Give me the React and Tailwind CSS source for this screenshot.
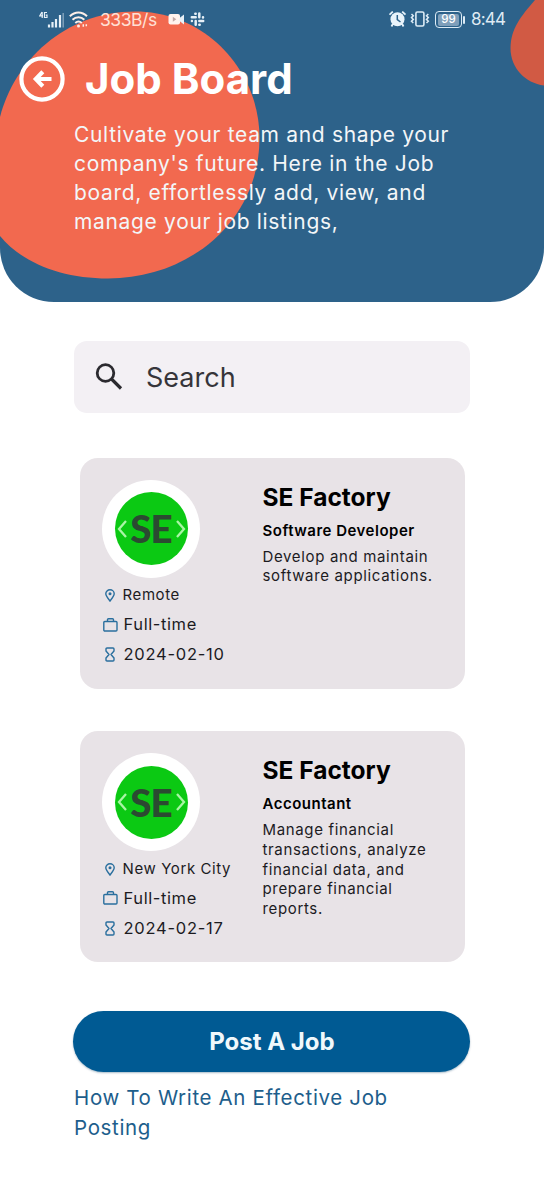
import React from "react";

const jobs = [
  {
    place: "Remote",
    type: "Full-time",
    date: "2024-02-10",
    role: "Software Developer",
    lines: ["Develop and maintain", "software applications."],
  },
  {
    place: "New York City",
    type: "Full-time",
    date: "2024-02-17",
    role: "Accountant",
    lines: ["Manage financial", "transactions, analyze", "financial data, and", "prepare financial", "reports."],
  },
];

function HeaderShapes() {
  return (
    <svg className="absolute inset-0" width="544" height="302" viewBox="0 0 544 302">
      <path d="M135 11.500C205 11.500 259.500 70 259.500 138C259.500 220 190 278.500 108 278.500C62 278.500 22 263 0 236V117C14 62 64 11.500 135 11.500Z" fill="#f2694f" />
      <path d="M535 0C521 16 510.500 29 510.500 48C510.500 68 525 83 544 85.500V0Z" fill="#d15a44" />
    </svg>
  );
}

function SignalIcon() {
  return (
    <svg width="26" height="18" viewBox="0 0 26 18" fill="none" stroke="#e6f0f7" className="shrink-0">
      <path d="M3 1L0.800 4.800H4M3.200 1V7M8 1.500H5.500V6.500H8V4.200H6.800" strokeWidth="1.200" />
      <path d="M10 13.500v3M13.500 11v5.500M17 8v8.500M21 4v12.500" strokeWidth="2.200" />
      <path d="M24.200 2v14.500" strokeWidth="1.500" opacity="0.45" />
    </svg>
  );
}

function WifiIcon() {
  return (
    <svg width="21" height="18" viewBox="0 0 21 18" fill="none" stroke="#fdeee8" strokeWidth="2" className="shrink-0">
      <path d="M0.800 5.300C6 .2 13 .2 18 5.300M3.500 8.800C7 5.500 12 5.500 15.300 8.800M6.300 12C8.500 10 10.500 10 12.800 12" />
      <circle cx="9.500" cy="15" r="1.500" fill="#fdeee8" stroke="none" />
      <path d="M14.300 13.300v2.500M17.300 13.300v2" strokeWidth="1.500" />
    </svg>
  );
}

function VideoIcon() {
  return (
    <svg width="17" height="12" viewBox="0 0 17 12" className="shrink-0">
      <rect x="0.500" y="0" width="11.500" height="10.500" rx="2" fill="#fff3ee" />
      <path d="M11.500 4L16 .5v10l-4.500-3.500Z" fill="#e8f0f6" />
      <path d="M4.800 2.800L8.300 5.300L4.800 7.800Z" fill="#c3a9a6" />
    </svg>
  );
}

function SlackIcon() {
  return (
    <svg width="15" height="15" viewBox="0 0 15 15" fill="none" stroke="#e6f0f7" strokeWidth="2.500" strokeLinecap="round" className="shrink-0">
      <path d="M5.700 5.300H1.800M9.300 1.600V5.300M9.300 9H13.200M5.700 9V12.800" />
      <path d="M5.300 1.700h.4M13 5.300v.1M9.300 12.700h.4M1.900 9v.1" />
    </svg>
  );
}

function AlarmIcon() {
  return (
    <svg width="18" height="17" viewBox="0 0 18 17" className="shrink-0">
      <circle cx="8.500" cy="8.200" r="7" fill="#e9f3fa" />
      <path d="M0.500 3.700L3.800 .6M16.500 3.700L13.200 .6M3.800 13L2.500 15.500M13.200 13L14.500 15.500" stroke="#e9f3fa" strokeWidth="1.800" fill="none" />
      <path d="M8.300 4V8.600L11.500 11" stroke="#2d628a" strokeWidth="1.500" fill="none" />
    </svg>
  );
}

function VibrateIcon() {
  return (
    <svg width="20" height="17" viewBox="0 0 20 17" fill="none" stroke="#dcebf5" className="shrink-0">
      <rect x="5.900" y="1" width="8" height="14" rx="1.500" strokeWidth="1.600" />
      <path d="M1.500 3L3.300 4.800L1.500 6.600L3.300 8.400L1.500 10.200L3.300 12M18.300 3L16.500 4.800L18.300 6.600L16.500 8.400L18.300 10.200L16.500 12" strokeWidth="1.500" />
    </svg>
  );
}

function StatusBar() {
  return (
    <div className="relative flex h-[38px] items-center pl-[39px] pr-[40px] pt-px">
      <SignalIcon />
      <span className="w-[4px]" />
      <WifiIcon />
      <span className="ml-[10px] w-[68px] whitespace-nowrap text-[17.5px] leading-none tracking-[-0.450px] text-[#ffe0d6]">333B/s</span>
      <VideoIcon />
      <span className="w-[5px]" />
      <SlackIcon />
      <div className="ml-auto flex items-center">
        <AlarmIcon />
        <span className="w-[3px]" />
        <VibrateIcon />
        <div className="ml-[5px] flex h-[17px] w-[27px] items-center justify-center rounded-[4px] border-[1.5px] border-[#dcebf5]">
          <span className="flex h-[12px] w-[21px] items-center justify-center rounded-[2px] bg-[#7f9fba] text-[11.5px] font-medium leading-none text-white">99</span>
        </div>
        <span className="ml-px h-[8px] w-[2px] rounded-sm bg-[#dcebf5]" />
        <span className="ml-[6px] w-[33px] whitespace-nowrap text-[17px] leading-none tracking-[-0.8px] text-[#dfeaf3]">8:44</span>
      </div>
    </div>
  );
}

function Header() {
  return (
    <header className="relative h-[302px] overflow-hidden rounded-b-[54px] bg-[#2d628a]">
      <HeaderShapes />
      <StatusBar />
      <div className="relative flex h-[82px] items-center pl-[19px]">
        <svg width="46" height="46" viewBox="0 0 46 46" fill="none" stroke="#ffffff" className="shrink-0">
          <circle cx="23" cy="23" r="20.600" strokeWidth="4.200" />
          <path d="M32.500 23H17M23.800 15.800L16.800 23L23.800 30.200" strokeWidth="4.200" />
        </svg>
        <h1 className="ml-[20px] whitespace-nowrap text-[42px] font-bold leading-none text-white">Job Board</h1>
      </div>
      <p className="relative ml-[74px] mt-[1.400px] whitespace-nowrap text-[21px] leading-[28.900px] tracking-[0.670px] text-[#f3f6f8]">
        Cultivate your team and shape your<br />
        company's future. Here in the Job<br />
        board, effortlessly add, view, and<br />
        manage your job listings,
      </p>
    </header>
  );
}

function Logo() {
  return (
    <div className="-ml-[0.500px] flex size-[98px] items-center justify-center rounded-full bg-white">
      <div className="flex size-[73px] items-center justify-center rounded-full bg-[#0bc913]">
        <svg width="10" height="18" viewBox="0 0 10 18" fill="none" stroke="#a9f5a5" strokeWidth="2.300" className="shrink-0"><path d="M9 1L2 9L9 17" /></svg>
        <span className="mx-[2px] flex w-[45px] justify-center font-['Lato'] text-[38.500px] font-black leading-none tracking-[-1px] text-[#2b4a31]">SE</span>
        <svg width="10" height="18" viewBox="0 0 10 18" fill="none" stroke="#a9f5a5" strokeWidth="2.300" className="shrink-0"><path d="M1 1L8 9L1 17" /></svg>
      </div>
    </div>
  );
}

function PinIcon() {
  return (
    <svg width="10" height="13" viewBox="0 0 10 13" fill="none" stroke="#2a6f9e" strokeWidth="1.400" className="-ml-px shrink-0">
      <path d="M5 12C2.500 8.800 .8 6.800 .8 4.800A4.200 4.100 0 0 1 9.200 4.800C9.200 6.800 7.500 8.800 5 12Z" />
      <circle cx="5" cy="4.700" r="1.500" fill="#2a6f9e" stroke="none" />
    </svg>
  );
}

function CaseIcon() {
  return (
    <svg width="15" height="14" viewBox="0 0 15 14" fill="none" stroke="#2a6f9e" strokeWidth="1.400" className="-ml-px shrink-0">
      <rect x="0.800" y="3.500" width="13.200" height="9.500" rx="1" />
      <path d="M4.500 3.500V1.800Q4.500 .8 5.500 .8H9.500Q10.500 .8 10.500 1.800V3.500" />
    </svg>
  );
}

function HourglassIcon() {
  return (
    <svg width="10" height="15" viewBox="0 0 10 15" fill="none" stroke="#2a6f9e" strokeWidth="1.400" className="-ml-px shrink-0">
      <path d="M2 1H8Q9 1 9 2V4L6 7.500L9 11V13Q9 14 8 14H2Q1 14 1 13V11L4 7.500L1 4V2Q1 1 2 1Z" strokeLinejoin="round" />
    </svg>
  );
}

function JobCard({ job }) {
  return (
    <article className="ml-[79.500px] flex h-[231px] w-[385px] rounded-[18px] bg-[#e8e3e7] pl-[23px] pt-[22px]">
      <div className="w-[160px] shrink-0 whitespace-nowrap text-[#1c1b1f]">
        <Logo />
        <div className="mt-[4px] flex h-[28px] items-center pl-[3px] text-[15px] tracking-[0.6px]">
          <PinIcon />
          <span className="ml-[8px]">{job.place}</span>
        </div>
        <div className="flex h-[30px] items-center pl-px text-[16.500px] tracking-[0.600px]">
          <CaseIcon />
          <span className="ml-[6px]">{job.type}</span>
        </div>
        <div className="flex h-[30px] items-center pl-[3px] text-[16.500px] tracking-[0.750px]">
          <HourglassIcon />
          <span className="ml-[9px]">{job.date}</span>
        </div>
      </div>
      <div className="whitespace-nowrap text-[#1c1b1f]">
        <h2 className="text-[24.500px] font-bold leading-[34px] text-black">SE Factory</h2>
        <h3 className="mt-[6px] text-[15px] font-semibold leading-[22px] tracking-[0.5px] text-black">{job.role}</h3>
        <p className="mt-[5px] text-[15px] leading-[19.600px] tracking-[0.65px]">
          {job.lines.map((line) => (
            <span key={line} className="block">{line}</span>
          ))}
        </p>
      </div>
    </article>
  );
}

export default function App() {
  return (
    <div className="h-[1180px] w-[544px] overflow-hidden bg-white font-['Inter',sans-serif]">
      <Header />
      <div className="mx-auto mt-[38.500px] flex h-[72.500px] w-[396px] items-center rounded-[13px] bg-[#f3f0f4] pl-[21px]">
        <svg width="30" height="30" viewBox="0 0 30 30" fill="none" stroke="#2b2a2f" strokeWidth="2.800" className="shrink-0">
          <circle cx="10.500" cy="11" r="8.300" />
          <path d="M16.500 17L26 26.500" strokeWidth="3.200" />
        </svg>
        <span className="ml-[21px] mt-[2px] text-[27px] text-[#36353a]">Search</span>
      </div>
      <main className="mt-[44.600px] flex flex-col gap-[42.800px]">
        {jobs.map((job) => (
          <JobCard key={job.date} job={job} />
        ))}
      </main>
      <button className="ml-[73.400px] mt-[48.200px] block h-[61px] w-[397px] rounded-full bg-[#005a93] pt-px text-[24px] font-bold text-[#f0f8fc] shadow-[0_1px_2px_rgba(0,60,100,0.35)]">
        Post A Job
      </button>
      <a className="ml-[74px] mt-[11px] block whitespace-nowrap text-[20.500px] leading-[30px] tracking-[0.650px] text-[#1d5e8c]">
        How To Write An Effective Job<br />
        Posting
      </a>
    </div>
  );
}
